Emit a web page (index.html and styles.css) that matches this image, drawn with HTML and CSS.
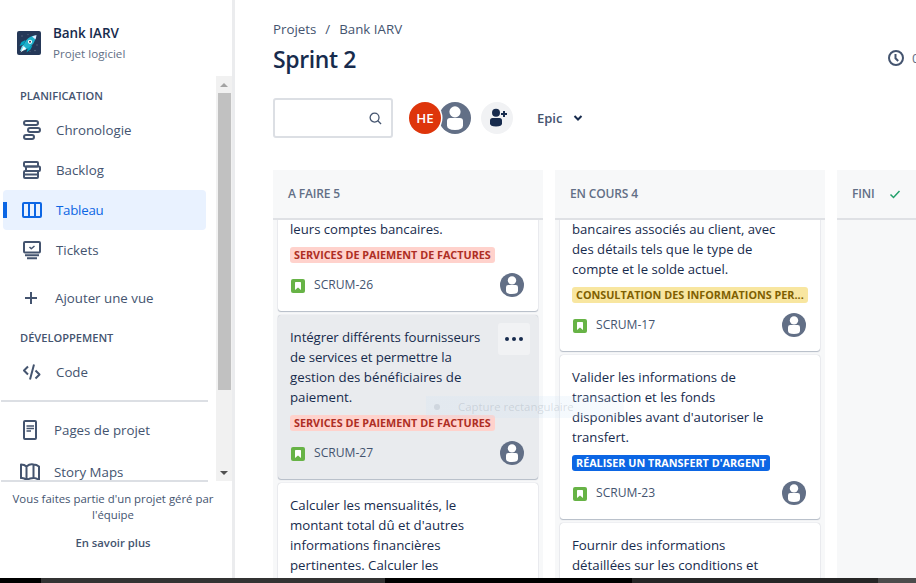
FILE: index.html
```html
<!DOCTYPE html>
<html lang="fr">
<head>
<meta charset="utf-8">
<title>Sprint 2 - Bank IARV</title>
<link rel="stylesheet" href="styles.css">
</head>
<body>
<svg class="defs" width="0" height="0">
  <symbol id="person" viewBox="0 0 24 24"><circle cx="12" cy="12" r="12" fill="#626f86"/><circle cx="12" cy="7.400" r="4.200" fill="#fff"/><path d="M6 14.300q0-2.300 2.300-2.300h7.400q2.300 0 2.300 2.300v3.400q0 3.300-6 3.300t-6-3.300z" fill="#fff"/></symbol>
  <symbol id="story" viewBox="0 0 14 14"><rect width="14" height="14" rx="2" fill="#67b346"/><path d="M4 3.700q0-.7.7-.7h4.600q.7 0 .7.700V11L7 8.400 4 11z" fill="#fff"/></symbol>
</svg>
<div class="app">
  <aside class="sidebar">
    <header class="project">
      <svg class="logo" viewBox="0 0 24 24"><rect width="24" height="24" rx="2" fill="#253858"/><g fill="#5e6c84"><circle cx="5" cy="5" r=".7"/><circle cx="11" cy="3.600" r=".6"/><circle cx="20" cy="14" r=".7"/><circle cx="18" cy="19.500" r=".8"/><circle cx="13" cy="20.500" r=".6"/></g><path d="M8.500 9 4.500 11 2.500 15l4.500-1.500zM15.500 14.500 13.500 18.500 9.500 21.500l1.500-5z" fill="#00a3bf"/><path d="M3 20l2-5 2.500-1.500 3 3L8.500 19z" fill="#79e2f2"/><path d="M3.500 21.500l3.200-6 2.300 2z" fill="#fff"/><path d="M6.500 14.500C8 9.500 12 5 18.500 4.500c.6 6-3.500 10.500-8.500 13.500z" fill="#1eb2cc"/><path d="M15 5.500q2-1 4.500-1.500-.2 2.500-1 4.500z" fill="#deebff"/><circle cx="13" cy="10.800" r="2.100" fill="#fff"/><circle cx="13" cy="10.800" r="1" fill="#253858"/></svg>
      <div><div class="project-name">Bank IARV</div><div class="project-type">Projet logiciel</div></div>
    </header>
    <div class="scroller">
      <nav class="nav">
        <h2 class="section">PLANIFICATION</h2>
        <a class="item"><svg viewBox="0 0 20 20"><g class="line"><rect x="2" y="1" width="14" height="4" rx="2"/><rect x="6" y="8" width="12" height="4" rx="2"/><rect x="2" y="15" width="10" height="4" rx="2"/></g></svg><span>Chronologie</span></a>
        <a class="item"><svg viewBox="0 0 20 20"><g class="line"><rect x="2" y="2" width="14" height="4.500" rx="1"/><rect x="4" y="6.500" width="14" height="4.500" rx="1"/><rect x="2" y="11" width="14" height="7" rx="1"/><path d="M2.500 14.500h13"/></g></svg><span>Backlog</span></a>
        <a class="item selected"><svg viewBox="0 0 20 20"><g class="line"><rect x="1" y="3" width="18" height="14" rx="1"/><path d="M7 3v14M13 3v14"/></g></svg><span>Tableau</span></a>
        <a class="item"><svg viewBox="0 0 20 20"><g class="line"><rect x="2" y="2" width="16" height="10.500" rx="1"/><path class="thin" d="M7.500 7l1.800 1.700L12.500 6"/><path d="M3 15.300h14M5 18.300h10"/></g></svg><span>Tickets</span></a>
        <a class="item add"><svg viewBox="0 0 20 20"><path class="line" d="M9 4v12M3 10h12"/></svg><span>Ajouter une vue</span></a>
        <h2 class="section">DÉVELOPPEMENT</h2>
        <a class="item"><svg viewBox="0 0 20 20"><path class="line" d="M6 4.500 2 8.500l4 4M12 2.500l-4 15M13.500 8.500l4 4-4 4"/></svg><span>Code</span></a>
        <hr class="rule">
        <a class="item pages"><svg viewBox="0 0 20 20"><g class="line"><rect x="2" y="1" width="12" height="18" rx="1"/><path class="thin" d="M4.500 6H12M4.500 8.500H12M4.500 11H9"/></g></svg><span>Pages de projet</span></a>
        <a class="item maps"><svg viewBox="0 0 20 20"><path class="line" d="M1 2.500q3.500 0 5.500 2Q10 1.500 13.500 2.500q3 0 5.500 2v14q-2.500-3-5.500-2.500-3.500 0-7 2Q4 15.500 1 16zM6.500 4.500V18M13.500 2.500V16"/></svg><span>Story Maps</span></a>
      </nav>
      <div class="scrollbar"><i class="up"></i><div class="thumb"></div><i class="down"></i></div>
    </div>
    <footer class="notice"><p>Vous faites partie d'un projet géré par<br>l'équipe</p><a>En savoir plus</a></footer>
  </aside>
  <main class="main">
    <div class="crumbs"><span>Projets</span><span class="slash">/</span><span>Bank IARV</span></div>
    <div class="title"><h1>Sprint 2</h1><div class="days"><svg viewBox="0 0 16 16"><circle cx="8" cy="8" r="7"/><path d="M7.500 4v4.300L10.200 11"/></svg><span>0</span></div></div>
    <div class="tools">
      <div class="search"><svg viewBox="0 0 14 14"><circle cx="6" cy="6" r="4.800"/><path d="M9.500 9.500l3.500 3.500"/></svg></div>
      <div class="he">HE</div>
      <svg class="unassigned"><use href="#person"/></svg>
      <div class="invite"><svg viewBox="0 0 20 20"><circle cx="9" cy="4.700" r="4"/><path d="M3 12.500Q3 10 5.500 10h7q2.500 0 2.500 2.500v3q0 3-6 3t-6-3z"/><path d="M17 3v6M14 6h6" stroke="#172b4d" stroke-width="2"/></svg></div>
      <div class="epic"><span>Epic</span><svg viewBox="0 0 10 8"><path d="M1.500 2l3.500 3.500L8.500 2"/></svg></div>
    </div>
    <div class="board">
      <section class="column">
        <h3>A FAIRE 5</h3>
        <article class="card cut"><p>leurs comptes bancaires.</p><b class="tag red">SERVICES DE PAIEMENT DE FACTURES</b><div class="meta"><svg class="kind"><use href="#story"/></svg><span>SCRUM-26</span><svg class="who"><use href="#person"/></svg></div></article>
        <article class="card hover"><p><span class="tight">Intégrer différents fournisseurs</span><br><span class="tight">de services et permettre la</span><br>gestion des bénéficiaires de<br>paiement.</p><b class="tag red">SERVICES DE PAIEMENT DE FACTURES</b><div class="meta"><svg class="kind"><use href="#story"/></svg><span>SCRUM-27</span><svg class="who"><use href="#person"/></svg></div><div class="more"><i></i><i></i><i></i></div></article>
        <article class="card wide"><p>Calculer les mensualités, le<br>montant total dû et d'autres<br>informations financières<br>pertinentes. Calculer les</p></article>
      </section>
      <section class="column">
        <h3>EN COURS 4</h3>
        <article class="card cut"><p>bancaires associés au client, avec<br>des détails tels que le type de<br>compte et le solde actuel.</p><b class="tag yellow">CONSULTATION DES INFORMATIONS PER...</b><div class="meta"><svg class="kind"><use href="#story"/></svg><span>SCRUM-17</span><svg class="who"><use href="#person"/></svg></div></article>
        <article class="card"><p>Valider les informations de<br>transaction et les fonds<br>disponibles avant d'autoriser le<br>transfert.</p><b class="tag blue">RÉALISER UN TRANSFERT D'ARGENT</b><div class="meta"><svg class="kind"><use href="#story"/></svg><span>SCRUM-23</span><svg class="who"><use href="#person"/></svg></div></article>
        <article class="card wide"><p>Fournir des informations<br>détaillées sur les conditions et</p></article>
      </section>
      <section class="column">
        <h3>FINI <svg class="done" viewBox="0 0 12 10"><path d="M1.500 5.500l3 3L10.500 2"/></svg></h3>
      </section>
    </div>
  </main>
  <div class="ghost"><i></i><span>Capture rectangulaire</span></div>
</div>
<div class="taskbar"></div>
</body>
</html>
```
FILE: styles.css
```css
* { box-sizing: border-box; }
body { margin: 0; width: 916px; height: 583px; overflow: hidden; background: #fff; color: #172b4d; font-family: "Open Sans", "Noto Sans", sans-serif; font-size: 13.3px; line-height: 20px; white-space: nowrap; }
h1, h2, h3, p { margin: 0; font-weight: 400; }
svg { display: block; flex: none; }
.defs { position: absolute; }
.app { position: relative; display: flex; height: 578px; overflow: hidden; }
.taskbar { height: 5px; background: linear-gradient(90deg, #000 41px, #333 41px 385px, #000 385px 632px, #262626 632px 878px, #4c4c4c 878px); }

.sidebar { width: 235px; flex: none; border-right: 3px solid #ebecee; display: flex; flex-direction: column; }
.project { height: 76px; padding: 23px 0 0 17px; display: flex; gap: 12px; }
.logo { width: 24px; height: 24px; margin-top: 8px; }
.project-name { font-weight: 600; font-size: 13.5px; letter-spacing: -0.1px; }
.project-type { font-size: 11.6px; color: #626f86; line-height: 22px; }
.scroller { display: flex; height: 405px; overflow: hidden; }
.nav { width: 216px; overflow: hidden; display: flex; flex-direction: column; }
.section { font-size: 11.1px; font-weight: 600; color: #44546f; padding-left: 20px; height: 34px; line-height: 40px; flex: none; }
.item { display: flex; align-items: center; height: 40px; margin-left: 3px; width: 203px; padding-left: 19px; gap: 14px; color: #44546f; flex: none; }
.item svg { width: 20px; height: 20px; }
.line { fill: none; stroke: currentColor; stroke-width: 2; stroke-linejoin: round; }
.thin { stroke-width: 1.5; }
.selected { color: #0c66e4; border-radius: 4px; background: linear-gradient(#0c66e4, #0c66e4) 0 center / 4px 16px no-repeat #e9f2ff; }
.selected span { letter-spacing: -0.25px; }
.item.add { margin-top: 8px; gap: 13px; }
.rule { border: 0; height: 2px; background: #dcdfe4; width: 207px; margin: 8px 0 8px 1px; flex: none; }
.item.pages { gap: 12px; }
.item.maps { margin: 2px 0 0; padding-left: 20px; }
.scrollbar { width: 16px; background: #f1f1f1; display: flex; flex-direction: column; align-items: center; padding-top: 7px; }
.up { border: 4px solid transparent; border-top: 0; border-bottom: 4px solid #a3a3a3; }
.thumb { width: 13px; height: 297px; background: #c1c1c1; margin: 6px 0 81px 1px; flex: none; }
.down { border: 4px solid transparent; border-bottom: 0; border-top: 4px solid #505050; }
.notice { width: 207px; margin: -1px 0 0 1px; border-top: 2px solid #dcdfe4; padding: 9px 0 0 17px; font-size: 11.4px; line-height: 16px; color: #44546f; display: flex; flex-direction: column; align-items: center; position: relative; text-align: center; gap: 12px; }
.notice a { font-weight: 600; font-size: 11.3px; }

.main { flex: 1; padding: 19px 0 0 38px; overflow: hidden; min-width: 0; }
.crumbs { display: flex; color: #44546f; }
.slash { margin: 0 9px; }
.title { display: flex; justify-content: space-between; height: 40px; align-items: center; }
h1 { font-size: 23px; font-weight: 600; letter-spacing: -0.4px; }
.days { display: flex; width: 28px; gap: 8px; align-items: center; overflow: hidden; color: #626f86; margin-top: -2px; }
.days svg { width: 16px; height: 16px; fill: none; stroke: #44546f; stroke-width: 2; }
.tools { display: flex; align-items: center; height: 40px; margin-top: 19px; }
.search { width: 120px; height: 40px; border: 2px solid #dcdfe4; border-radius: 3px; display: flex; align-items: center; justify-content: flex-end; padding-right: 9px; }
.search svg { width: 13px; height: 13px; fill: none; stroke: #44546f; stroke-width: 1.4; }
.he { width: 32px; height: 32px; margin-left: 16px; border-radius: 50%; background: #de350b; box-shadow: 0 0 0 1.5px #fff; color: #fff; font-weight: 600; text-align: center; line-height: 32px; position: relative; z-index: 1; }
.unassigned { width: 32px; height: 32px; margin-left: -2px; }
.invite { width: 32px; height: 32px; margin-left: 10px; border-radius: 50%; background: #f1f2f4; display: grid; place-items: center; }
.invite svg { width: 20px; height: 20px; fill: #172b4d; }
.epic { display: flex; align-items: center; margin-left: 24px; gap: 11px; font-weight: 600; font-size: 13px; color: #44546f; }
.epic svg { width: 10px; height: 8px; fill: none; stroke: #172b4d; stroke-width: 2; }

.board { display: flex; gap: 12px; margin-top: 32px; height: 408px; width: 834px; }
.column { width: 270px; flex: none; background: #f7f8f9; overflow: hidden; }
h3 { height: 50px; border-bottom: 2px solid #dfe1e5; line-height: 48px; padding-left: 15px; font-size: 12px; font-weight: 600; letter-spacing: -0.15px; color: #626f86; display: flex; align-items: center; }
.card { position: relative; margin: 0 5px 4px; width: 260px; padding: 12px 12px 14px; background: #fff; border-radius: 3px; box-shadow: 0 1px 1px #091e4240, 0 0 1px #091e424f; }
.card p { font-size: 13.15px; }
.card.cut { margin-top: -1px; padding-top: 0; border-radius: 0 0 3px 3px; clip-path: inset(1px -2px -3px -2px); }
.card.hover { background: #e9ebee; }
.card.hover p, .card.wide p { font-size: 13.25px; }
.tight { letter-spacing: -0.1px; }
.tag { display: block; width: max-content; height: 16px; margin-top: 8px; padding: 0 4px; border-radius: 3px; font-size: 10.8px; line-height: 16px; font-weight: 700; }
.red { background: #ffd2cc; color: #ae2e24; }
.yellow { background: #f8e6a0; color: #7f5f01; }
.blue { background: #0c66e4; color: #fff; }
.meta { display: flex; align-items: center; margin-top: 10px; height: 24px; color: #44546f; font-size: 12.1px; }
.meta span { margin-top: -1px; }
.kind { width: 14px; height: 14px; margin: 2px 9px 0 1px; }
.who { width: 24px; height: 24px; margin-left: auto; margin-right: 2px; }
.more { position: absolute; top: 8px; right: 8px; width: 32px; height: 32px; border-radius: 3px; background: #f1f2f4; display: flex; align-items: center; justify-content: center; gap: 3px; }
.more i { width: 4px; height: 4px; border-radius: 50%; background: #172b4d; }
.done { width: 12px; height: 10px; margin-left: 14px; fill: none; stroke: #22a06b; stroke-width: 1.5; }
.ghost { position: absolute; left: 426px; top: 396px; width: 198px; height: 22px; display: flex; align-items: center; background: linear-gradient(90deg, #c9e1f62e, #c9e1f630 80%, #c9e1f620); color: #7a87933d; font-size: 11.4px; padding-left: 8px; gap: 18px; }
.ghost i { width: 6px; height: 6px; border-radius: 50%; background: #7a879330; }
```
